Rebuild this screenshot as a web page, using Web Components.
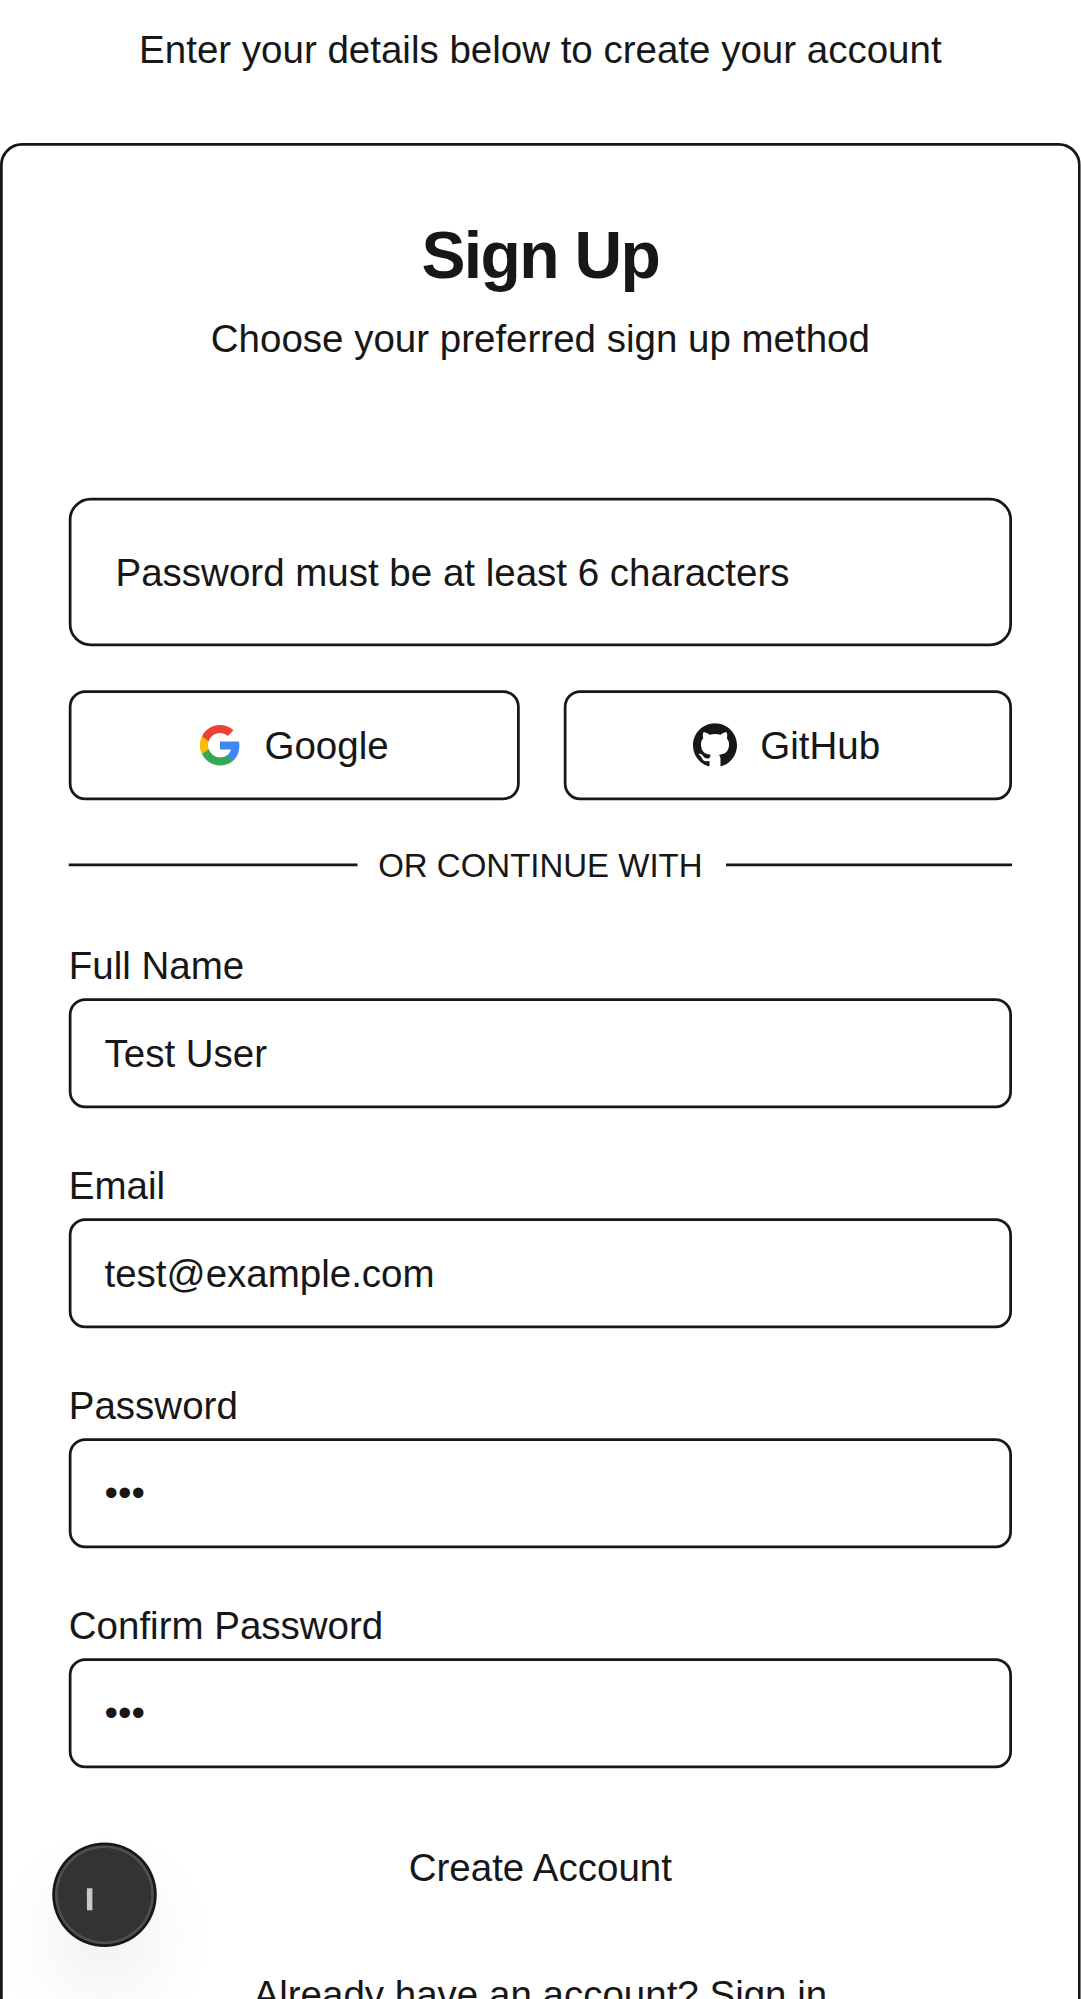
<!DOCTYPE html>
<html lang="en">
<head>
<meta charset="utf-8">
<title>Sign Up</title>
<style>
  html, body { margin: 0; background: #fff; }
  body { width: 1081px; height: 1999px; overflow: hidden; }
</style>
</head>
<body>
<signup-page>
  <signup-card heading="Sign Up" subtitle="Choose your preferred sign up method">
    <form-alert>Password must be at least 6 characters</form-alert>
    <provider-row>
      <provider-button label="Google">
        <svg slot="icon" width="16" height="16" viewBox="0 0 24 24"><path fill="#4285F4" d="M22.56 12.25c0-.78-.07-1.53-.2-2.25H12v4.26h5.92c-.26 1.37-1.04 2.53-2.21 3.31v2.77h3.57c2.08-1.92 3.28-4.74 3.28-8.09z"/><path fill="#34A853" d="M12 23c2.97 0 5.46-.98 7.28-2.66l-3.57-2.77c-.98.66-2.23 1.06-3.71 1.06-2.86 0-5.29-1.93-6.16-4.53H2.18v2.84C3.99 20.53 7.7 23 12 23z"/><path fill="#FBBC05" d="M5.84 14.09c-.22-.66-.35-1.36-.35-2.09s.13-1.43.35-2.09V7.07H2.18C1.43 8.55 1 10.22 1 12s.43 3.45 1.18 4.93l2.85-2.22.81-.62z"/><path fill="#EA4335" d="M12 5.38c1.62 0 3.06.56 4.21 1.64l3.15-3.15C17.45 2.09 14.97 1 12 1 7.7 1 3.99 3.47 2.18 7.07l3.66 2.84c.87-2.6 3.3-4.53 6.16-4.53z"/></svg>
      </provider-button>
      <provider-button label="GitHub">
        <svg slot="icon" width="16" height="16" viewBox="0 0 24 24"><path fill="currentColor" d="M12 0c-6.626 0-12 5.373-12 12 0 5.302 3.438 9.8 8.207 11.387.599.111.793-.061.793-.277v-2.534c-3.338.726-4.033-1.416-4.033-1.416-.546-1.387-1.333-1.756-1.333-1.756-1.089-.745.083-.729.083-.729 1.205.084 1.839 1.237 1.839 1.237 1.07 1.834 2.807 1.304 3.492.997.107-.775.418-1.305.762-1.604-2.665-.305-5.467-1.334-5.467-5.931 0-1.311.469-2.381 1.236-3.221-.124-.303-.535-1.524.117-3.176 0 0 1.008-.322 3.301 1.23.957-.266 1.983-.399 3.003-.404 1.02.005 2.047.138 3.006.404 2.291-1.552 3.297-1.23 3.297-1.23.653 1.653.242 2.874.118 3.176.77.84 1.235 1.911 1.235 3.221 0 4.609-2.807 5.624-5.479 5.921.43.372.823 1.102.823 2.222v3.593c0 .219.192.394.801.276 4.765-1.589 8.199-6.086 8.199-11.386 0-6.627-5.373-12-12-12z"/></svg>
      </provider-button>
    </provider-row>
    <text-divider>OR CONTINUE WITH</text-divider>
    <form-field label="Full Name">Test User</form-field>
    <form-field label="Email">test@example.com</form-field>
    <form-field label="Password" masked>•••</form-field>
    <form-field label="Confirm Password" masked>•••</form-field>
    <submit-button>Create Account</submit-button>
    <signin-link>Already have an account? Sign in</signin-link>
  </signup-card>
  <dev-indicator slot="overlay"></dev-indicator>
</signup-page>
<script>
const define = (name, html, fill) => customElements.define(name, class extends HTMLElement {
  constructor() {
    super();
    this.attachShadow({ mode: "open" }).innerHTML = html;
  }
  connectedCallback() { if (fill) fill(this, this.shadowRoot); }
});

define("signup-page", `
  <style>
    :host { display: block; position: relative; box-sizing: border-box; width: 393px; height: 727px; padding-top: 8px;
      overflow: hidden; transform: scale(2.75); transform-origin: 0 0;
      font: 14px/20px "Liberation Sans", Arial, sans-serif; color: #171717; background: #fff; }
    p { margin: 0 0 24px; text-align: center; }
  </style>
  <p>Enter your details below to create your account</p>
  <slot></slot><slot name="overlay"></slot>`);

define("signup-card", `
  <style>
    :host { display: flex; flex-direction: column; box-sizing: border-box; height: 740px; padding: 24px;
      border: 1px solid #171717; border-radius: 8px; box-shadow: 0 1px 2px rgba(0,0,0,.05); }
    header { text-align: center; padding-bottom: 48px; }
    h1 { margin: 0 0 4px; font-size: 24px; line-height: 32px; letter-spacing: -.6px; font-weight: 700; }
    p { margin: 0; }
  </style>
  <header><h1></h1><p></p></header>
  <slot></slot>`, (el, root) => {
  root.querySelector("h1").textContent = el.getAttribute("heading");
  root.querySelector("p").textContent = el.getAttribute("subtitle");
});

define("form-alert", `
  <style>:host { display: block; padding: 16px; border: 1px solid #171717; border-radius: 8px; }</style>
  <slot></slot>`);

define("provider-row", `
  <style>:host { display: grid; grid-template-columns: 1fr 1fr; gap: 16px; margin: 16px 0; }</style>
  <slot></slot>`);

define("provider-button", `
  <style>
    :host { display: flex; box-sizing: border-box; height: 40px; align-items: center; justify-content: center; gap: 8px;
      border: 1px solid #171717; border-radius: 6px; }
    ::slotted(svg) { display: block; }
  </style>
  <slot name="icon"></slot><span></span>`, (el, root) => {
  root.querySelector("span").textContent = el.getAttribute("label");
});

define("text-divider", `
  <style>
    :host { display: flex; align-items: center; gap: 8px; font-size: 12px; line-height: 16px; }
    i { flex: 1; height: 1px; margin-bottom: 1px; background: #171717; }
  </style>
  <i></i><span><slot></slot></span><i></i>`);

define("form-field", `
  <style>
    :host { display: flex; flex-direction: column; padding-top: 18.25px; gap: 1.75px; }
    .box { box-sizing: border-box; height: 40px; padding: 9px 12px; border: 1px solid #171717; border-radius: 6px; }
    :host([masked]) span { display: block; transform: translateY(-.36px); }
  </style>
  <label></label><div class="box"><span><slot></slot></span></div>`, (el, root) => {
  root.querySelector("label").textContent = el.getAttribute("label");
});

define("submit-button", `
  <style>:host { display: flex; height: 40px; margin: 16px 0; align-items: center; justify-content: center; }</style>
  <slot></slot>`);

define("signin-link", `
  <style>:host { display: block; text-align: center; }</style>
  <slot></slot>`);

define("dev-indicator", `
  <style>
    :host { display: block; position: absolute; left: 20px; top: 671px; width: 36px; height: 36px; border-radius: 50%;
      background: #333;
      box-shadow: 0 0 0 1px #171717, inset 0 0 0 1px rgba(255,255,255,.14), 0 16px 32px -8px rgba(0,0,0,.24); }
    i { display: block; width: 2px; height: 8px; margin: 16px 0 0 12px; background: #c8c8c8; transform: translate(-.4px, -.36px); }
  </style>
  <i></i>`);
</script>
</body>
</html>
